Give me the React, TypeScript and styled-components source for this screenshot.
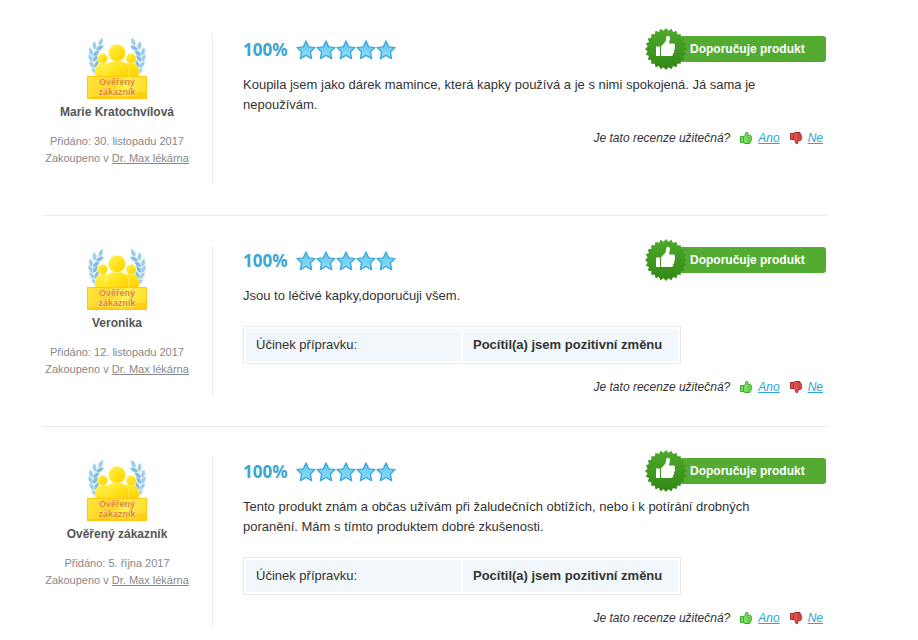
import React from "react";
import styled, { createGlobalStyle } from "styled-components";

const GlobalStyle = createGlobalStyle`
  * { box-sizing: border-box; }
  body {
    margin: 0;
    background: #fff;
    color: #333;
    font: 13px/20px "Liberation Sans", Arial, sans-serif;
  }
`;

const Reviews = styled.main`
  padding: 5px 91px 0 42px;
`;

const Review = styled.article`
  display: flex;
  padding: 30px 0;
  border-bottom: 1px solid #ebebeb;
  &:last-child {
    padding-bottom: 12px;
    border-bottom: 0;
  }
`;

const Author = styled.aside`
  flex: none;
  width: 171px;
  min-height: 150px;
  padding: 2px 20px 0 0;
  border-right: 1px solid #ebebeb;
  text-align: center;
  font-size: 11px;
  line-height: 17px;
  color: #888;
`;

const AuthorBadge = styled.svg`
  display: block;
  width: 62px;
  height: 63px;
  margin: 0 auto 2px;
`;

const AuthorName = styled.h3`
  margin: 0 0 11px;
  font-size: 12px;
  line-height: 20px;
  color: #555;
`;

const Meta = styled.p`
  margin: 0;
  white-space: nowrap;
`;

const ShopLink = styled.a`
  color: #888;
`;

const Body = styled.div`
  flex: 1;
  min-width: 0;
  padding-left: 30px;
`;

const Header = styled.header`
  display: flex;
  align-items: center;
  height: 30px;
  margin-bottom: 10px;
`;

const Score = styled.strong`
  width: 52px;
  font: bold 17px/30px "Noto Sans", "Open Sans", sans-serif;
  color: #39a5d2;
`;

const Stars = styled.svg`
  width: 102px;
  height: 22px;
`;

const Recommendation = styled.div`
  display: flex;
  align-items: center;
  align-self: flex-start;
  width: 181px;
  height: 28px;
  margin: 0 1px 0 auto;
`;

const Seal = styled.svg`
  flex: none;
  width: 42px;
  height: 42px;
  z-index: 1;
`;

const Ribbon = styled.span`
  flex: 1;
  height: 26px;
  margin-left: -20px;
  padding-left: 23px;
  border-radius: 0 3px 3px 0;
  background: #54ab32;
  color: #fff;
  font-size: 12px;
  font-weight: bold;
  line-height: 26px;
`;

const Text = styled.p`
  max-width: 540px;
  margin: 0;
`;

const Effects = styled.table`
  width: 438px;
  margin-top: 20px;
  border: 1px solid #e9e9e9;
  border-spacing: 2px;
  border-collapse: separate;
  table-layout: fixed;
  th, td {
    height: 32px;
    padding: 0 10px;
    background: #f1f7fa;
    text-align: left;
    white-space: nowrap;
  }
  th { font-weight: normal; }
  td { font-weight: bold; }
`;

const Feedback = styled.div`
  display: flex;
  align-items: center;
  justify-content: flex-end;
  margin-top: 14px;
  padding-right: 4px;
  font-size: 12px;
  line-height: 18px;
  font-style: italic;
`;

const Vote = styled.a`
  display: flex;
  align-items: center;
  gap: 5px;
  margin-left: 9px;
  color: #2ba6d6;
`;

const Thumb = styled.svg`
  width: 14px;
  height: 14px;
`;

const leaves = [
  [12, 37, -48], [9, 31, -42], [7, 25, -32], [6, 19, -14], [9, 13, -6], [13, 9, 24],
  [12, 37, 12], [9, 31, 22], [7, 25, 32], [7, 19, 48], [10, 13, 62],
];

function Laurel() {
  return (
    <g>
      <path d="M13 39C5 30 3 19 15 8" fill="none" stroke="#a8d4ec" />
      {leaves.map(([x, y, angle], i) => (
        <path
          key={i}
          d="M0 0C-3-2-2.500-6 0-9C2.500-6 3-2 0 0z"
          fill={i < 6 ? "#9ccdea" : "#83bbdc"}
          stroke="#e6f4fb"
          strokeWidth="0.5"
          transform={`translate(${x} ${y}) rotate(${angle})`}
        />
      ))}
    </g>
  );
}

function VerifiedIcon({ id }: { id: string }) {
  return (
    <AuthorBadge viewBox="0 0 62 63" role="img" aria-label="Ověřený zákazník">
      <defs>
        <linearGradient id={`${id}-gold`} x1="0" y1="0" x2="1" y2="1">
          <stop offset="0" stopColor="#fff25a" />
          <stop offset="0.5" stopColor="#ffe21a" />
          <stop offset="1" stopColor="#ffcd00" />
        </linearGradient>
        <linearGradient id={`${id}-plate`} x1="0" y1="0" x2="1" y2="0.2">
          <stop offset="0" stopColor="#ffe640" />
          <stop offset="0.45" stopColor="#ffd21c" />
          <stop offset="0.7" stopColor="#fff04d" />
          <stop offset="1" stopColor="#ffdf30" />
        </linearGradient>
      </defs>
      <Laurel />
      <g transform="matrix(-1 0 0 1 62 0)"><Laurel /></g>
      <g fill={`url(#${id}-gold)`} stroke="#fff48a" strokeWidth="0.5">
        <path d="M9 41v-6c0-6 3-9 8-9h28c5 0 8 3 8 9v6z" />
        <circle cx="16.500" cy="21.500" r="5" />
        <circle cx="45" cy="21.500" r="5" />
        <path d="M20 41c-3-10 0-17 11-17s14 7 11 17z" />
        <circle cx="31" cy="16" r="8.500" />
      </g>
      <rect x="1.500" y="39.500" width="59" height="22" fill={`url(#${id}-plate)`} stroke="#ffc814" />
      <path d="M2 60l30-2 28-4v7H2z" fill="#ffc400" opacity="0.6" />
      <g
        fontFamily="Liberation Sans, sans-serif"
        fontSize="9"
        fontWeight="bold"
        textAnchor="middle"
        fill="#e08214"
        stroke="#ffef9a"
        strokeWidth="1"
        paintOrder="stroke"
      >
        <text x="31" y="48">Ověřený</text>
        <text x="31" y="58">zákazník</text>
      </g>
    </AuthorBadge>
  );
}

function FiveStars({ id }: { id: string }) {
  return (
    <Stars viewBox="0 0 102 22" role="img" aria-label="5 z 5">
      <defs>
        <linearGradient id={`${id}-star`} x1="0" y1="0" x2="0" y2="1">
          <stop offset="0" stopColor="#63c6ed" />
          <stop offset="1" stopColor="#8eddf8" />
        </linearGradient>
      </defs>
      {[0, 20, 40, 60, 80].map((x) => (
        <path
          key={x}
          transform={`translate(${x} 0)`}
          d="M11 2l2.700 5.900 6.300.7-4.600 4.300 1.200 6.700-5.600-3.200-5.600 3.200 1.200-6.700L2 8.600l6.300-.7z"
          fill={`url(#${id}-star)`}
          stroke="#3fa9de"
          strokeWidth="1.400"
          strokeLinejoin="round"
        />
      ))}
    </Stars>
  );
}

const sealPoints = Array.from({ length: 48 }, (_, i) => {
  const r = i % 2 ? 18.5 : 21;
  const a = (i * Math.PI) / 24;
  return `${(21 + r * Math.cos(a)).toFixed(2)},${(21 + r * Math.sin(a)).toFixed(2)}`;
}).join(" ");

function SealIcon({ id }: { id: string }) {
  return (
    <Seal viewBox="0 0 42 42" aria-hidden="true">
      <defs>
        <linearGradient id={`${id}-seal`} x1="0" y1="0" x2="0" y2="1">
          <stop offset="0" stopColor="#4faa2c" />
          <stop offset="1" stopColor="#328717" />
        </linearGradient>
      </defs>
      <polygon points={sealPoints} fill={`url(#${id}-seal)`} />
      <path
        d="M11 18.500H15V28H11zM16 18.500L20.500 13.500L21.500 8.500C22 7 25 7.500 25 10L24 15.500H28.500C30 15.500 30.500 17.500 29.500 18.500C30.500 19.500 30 21.500 29 22C29.500 23.500 29 25 28 25.500C28.500 27 27.500 28 26 28H16z"
        fill="#fff"
      />
    </Seal>
  );
}

function ThumbIcon({ down = false }: { down?: boolean }) {
  return (
    <Thumb viewBox="0 0 14 14" aria-hidden="true">
      <g
        transform={down ? "matrix(1 0 0 -1 0 14)" : undefined}
        fill={down ? "#e0524c" : "#7ddc62"}
        stroke={down ? "#a82a2a" : "#3aaa30"}
      >
        <path d="M1.500 5.500H4.500V11.500H1.500z" />
        <path d="M4.500 5.500L6.500 4.500V2.500C6.500 1 9 1 9 2.500V4.500H11.500C12.500 5 12.800 6 12.300 6.800C13 7.500 12.800 8.500 12.200 9C12.500 10 12 11 11 11V12.500H6L4.500 11.500z" />
        <path d="M8.500 6.800H12M8.500 9H12M8.500 11H11" strokeWidth="0.700" />
      </g>
    </Thumb>
  );
}

interface ReviewData {
  id: string;
  name: string;
  date: string;
  text: string;
  effect?: string;
}

const reviews: ReviewData[] = [
  {
    id: "r1",
    name: "Marie Kratochvílová",
    date: "30. listopadu 2017",
    text: "Koupila jsem jako dárek mamince, která kapky používá a je s nimi spokojená. Já sama je nepoužívám.",
  },
  {
    id: "r2",
    name: "Veronika",
    date: "12. listopadu 2017",
    text: "Jsou to léčivé kapky,doporučuji všem.",
    effect: "Pocítil(a) jsem pozitivní změnu",
  },
  {
    id: "r3",
    name: "Ověřený zákazník",
    date: "5. října 2017",
    text: "Tento produkt znám a občas užívám při žaludečních obtížích, nebo i k potírání drobných poranění. Mám s tímto produktem dobré zkušenosti.",
    effect: "Pocítil(a) jsem pozitivní změnu",
  },
];

export default function App() {
  return (
    <>
      <GlobalStyle />
      <Reviews>
        {reviews.map((r) => (
          <Review key={r.id}>
            <Author>
              <VerifiedIcon id={r.id} />
              <AuthorName>{r.name}</AuthorName>
              <Meta>Přidáno: {r.date}</Meta>
              <Meta>
                Zakoupeno v <ShopLink href="#obchod">Dr. Max lékárna</ShopLink>
              </Meta>
            </Author>
            <Body>
              <Header>
                <Score>100%</Score>
                <FiveStars id={r.id} />
                <Recommendation>
                  <SealIcon id={r.id} />
                  <Ribbon>Doporučuje produkt</Ribbon>
                </Recommendation>
              </Header>
              <Text>{r.text}</Text>
              {r.effect && (
                <Effects>
                  <tbody>
                    <tr>
                      <th scope="row">Účinek přípravku:</th>
                      <td>{r.effect}</td>
                    </tr>
                  </tbody>
                </Effects>
              )}
              <Feedback>
                <span>Je tato recenze užitečná?</span>
                <Vote href="#ano"><ThumbIcon />Ano</Vote>
                <Vote href="#ne"><ThumbIcon down />Ne</Vote>
              </Feedback>
            </Body>
          </Review>
        ))}
      </Reviews>
    </>
  );
}
